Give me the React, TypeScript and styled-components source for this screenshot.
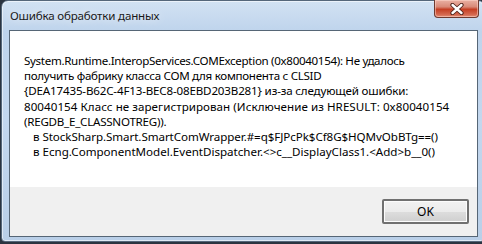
import React from 'react'
import styled, { createGlobalStyle } from 'styled-components'

const GlobalStyle = createGlobalStyle`
    html, body {
        margin: 0;
        padding: 0;
        background: #2b3440;
        overflow: hidden;
    }
`

const Window = styled.div`
    margin-left: 1px;
    width: 484px;
    height: 242px;
    box-sizing: border-box;
    border: 1px solid #55677a;
    border-radius: 7px 7px 4px 4px;
    background: linear-gradient(180deg, #d2e2f3 0px, #bfd4ec 30px, #c3d7ee 120px, #b9cfe8 100%);
    box-shadow: inset 0 0 0 1px rgba(255, 255, 255, 0.55);
    display: flex;
    flex-direction: column;
    font-family: 'Noto Sans', 'Open Sans', sans-serif;
`

const TitleBar = styled.div`
    height: 29px;
    display: flex;
    align-items: flex-start;
    justify-content: space-between;
    padding-left: 8px;
    padding-right: 5px;
`

const Title = styled.span`
    margin-top: 7px;
    font-size: 11.6px;
    letter-spacing: -0.2px;
    color: #1a1a1a;
    text-shadow: 0 0 8px rgba(255, 255, 255, 0.9);
`

const CloseButton = styled.div`
    width: 45px;
    height: 18px;
    margin-top: -1px;
    box-sizing: border-box;
    border: 1px solid #6e3a30;
    border-top: none;
    border-radius: 0 0 4px 4px;
    background: linear-gradient(180deg, #eab1a3 0%, #d98a78 40%, #c53f24 55%, #d4684f 85%, #e28d75 100%);
    display: flex;
    align-items: center;
    justify-content: center;
    box-shadow: inset 0 0 0 1px rgba(255, 220, 210, 0.5);
`

const Client = styled.div`
    margin: 0 6px 0 7px;
    height: 207px;
    box-sizing: border-box;
    border: 1px solid #566676;
    display: flex;
    flex-direction: column;
`

const MessageArea = styled.div`
    flex: 1;
    background: #ffffff;
    padding: 22px 0 0 14px;
`

const Line = styled.div<{ $indent?: number; $track: number }>`
    font-size: 11.6px;
    line-height: 15.2px;
    color: #000;
    white-space: pre;
    padding-left: ${(p) => p.$indent ?? 0}px;
    letter-spacing: ${(p) => p.$track}px;
`

const Footer = styled.div`
    height: 49px;
    background: #f0f0f0;
    display: flex;
    align-items: flex-start;
    justify-content: flex-end;
    padding: 12px 8px 0 0;
    box-sizing: border-box;
`

const OkButton = styled.button`
    width: 87px;
    height: 25px;
    box-sizing: border-box;
    border: 2px solid #707070;
    border-radius: 2px;
    background: linear-gradient(180deg, #f2f2f2 0%, #ebebeb 50%, #dddddd 51%, #cfcfcf 100%);
    box-shadow: inset 0 0 0 1px #fcfcfc;
    font-family: 'Noto Sans', 'Open Sans', sans-serif;
    font-size: 12px;
    color: #000;
    padding: 0;
`

const lines = [
    { text: 'System.Runtime.InteropServices.COMException (0x80040154): Не удалось', track: -0.33 },
    { text: 'получить фабрику класса COM для компонента с CLSID', track: -0.3 },
    { text: '{DEA17435-B62C-4F13-BEC8-08EBD203B281} из-за следующей ошибки:', track: -0.17 },
    { text: '80040154 Класс не зарегистрирован (Исключение из HRESULT: 0x80040154', track: 0.05 },
    { text: '(REGDB_E_CLASSNOTREG)).', track: -0.25 },
    { text: 'в StockSharp.Smart.SmartComWrapper.#=q$FJPcPk$Cf8G$HQMvObBTg==()', track: -0.07, indent: 9 },
    { text: 'в Ecng.ComponentModel.EventDispatcher.<>c__DisplayClass1.<Add>b__0()', track: -0.01, indent: 9 },
]

const CloseIcon = () => (
    <svg width="14" height="12" viewBox="0 0 14 12">
        <path d="M2.5 2 L11.5 10 M11.5 2 L2.5 10" stroke="#4a2018" strokeWidth="4.2" strokeLinecap="round" />
        <path d="M2.5 2 L11.5 10 M11.5 2 L2.5 10" stroke="#ffffff" strokeWidth="2.4" strokeLinecap="round" />
    </svg>
)

export default function App() {
    return (
        <>
            <GlobalStyle />
            <Window>
                <TitleBar>
                    <Title>Ошибка обработки данных</Title>
                    <CloseButton>
                        <CloseIcon />
                    </CloseButton>
                </TitleBar>
                <Client>
                    <MessageArea>
                        {lines.map((l, i) => (
                            <Line key={i} $track={l.track} $indent={l.indent}>
                                {l.text}
                            </Line>
                        ))}
                    </MessageArea>
                    <Footer>
                        <OkButton>OK</OkButton>
                    </Footer>
                </Client>
            </Window>
        </>
    )
}
